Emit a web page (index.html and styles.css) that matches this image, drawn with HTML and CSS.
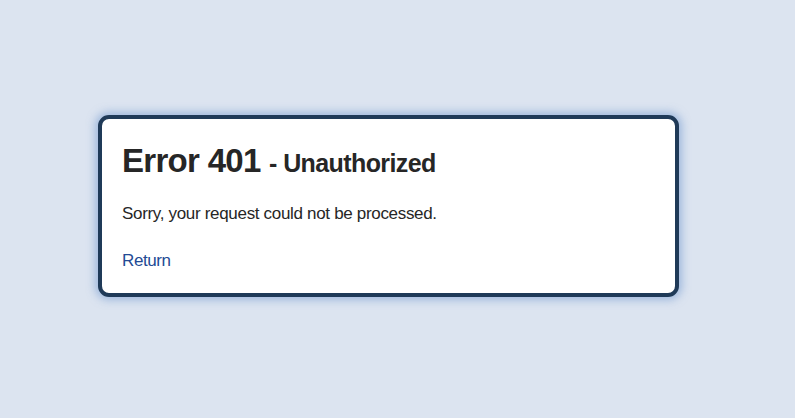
FILE: index.html
```html
<!DOCTYPE html>
<html>
<head>
<meta charset="utf-8">
<link rel="stylesheet" href="styles.css">
</head>
<body>
<div class="page">
  <div class="box">
    <h1 class="title">Error 401 <span class="sub">- Unauthorized</span></h1>
    <p class="msg">Sorry, your request could not be processed.</p>
    <a class="link" href="#">Return</a>
  </div>
</div>
</body>
</html>
```
FILE: styles.css
```css
html, body {
  margin: 0;
  padding: 0;
  background: #dce4f0;
  width: 795px;
  height: 418px;
  overflow: hidden;
}
.page {
  padding: 115px 0 0 98px;
  font-family: "Liberation Sans", Arial, sans-serif;
}
.box {
  box-sizing: border-box;
  width: 581px;
  height: 182px;
  background: #fff;
  border: 4px solid #1f3a58;
  border-radius: 11px;
  box-shadow: 0 0 8px 3px rgba(110, 150, 205, 0.55);
  padding: 24px 20px 0 20px;
}
.title {
  margin: 0;
  font-size: 33px;
  font-weight: bold;
  color: #262626;
  line-height: 36px;
  letter-spacing: -0.7px;
}
.sub {
  font-size: 25px;
  letter-spacing: -0.6px;
}
.msg {
  margin: 23px 0 0 0;
  font-size: 17px;
  color: #262626;
  line-height: 20px;
  letter-spacing: -0.32px;
}
.link {
  display: inline-block;
  margin-top: 27px;
  font-size: 17px;
  color: #234a94;
  text-decoration: none;
  line-height: 20px;
  letter-spacing: -0.4px;
}
```
